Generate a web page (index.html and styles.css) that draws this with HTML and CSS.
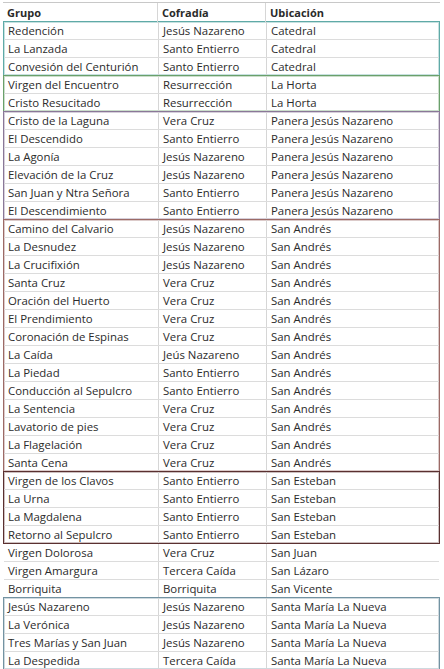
FILE: index.html
```html
<!DOCTYPE html>
<html lang="es">
<head>
<meta charset="utf-8">
<title>Grupos</title>
<link rel="stylesheet" href="styles.css">
</head>
<body>
<div class="sheet">
  <div class="row head">
    <div class="c">Grupo</div><div class="c">Cofradía</div><div class="c">Ubicación</div>
  </div>
  <div class="grp g1">
    <div class="row"><div class="c">Redención</div><div class="c">Jesús Nazareno</div><div class="c">Catedral</div></div>
    <div class="row"><div class="c">La Lanzada</div><div class="c">Santo Entierro</div><div class="c">Catedral</div></div>
    <div class="row"><div class="c">Convesión del Centurión</div><div class="c">Santo Entierro</div><div class="c">Catedral</div></div>
  </div>
  <div class="grp g2">
    <div class="row"><div class="c">Virgen del Encuentro</div><div class="c">Resurrección</div><div class="c">La Horta</div></div>
    <div class="row"><div class="c">Cristo Resucitado</div><div class="c">Resurrección</div><div class="c">La Horta</div></div>
  </div>
  <div class="grp g3">
    <div class="row"><div class="c">Cristo de la Laguna</div><div class="c">Vera Cruz</div><div class="c">Panera Jesús Nazareno</div></div>
    <div class="row"><div class="c">El Descendido</div><div class="c">Santo Entierro</div><div class="c">Panera Jesús Nazareno</div></div>
    <div class="row"><div class="c">La Agonía</div><div class="c">Jesús Nazareno</div><div class="c">Panera Jesús Nazareno</div></div>
    <div class="row"><div class="c">Elevación de la Cruz</div><div class="c">Jesús Nazareno</div><div class="c">Panera Jesús Nazareno</div></div>
    <div class="row"><div class="c">San Juan y Ntra Señora</div><div class="c">Santo Entierro</div><div class="c">Panera Jesús Nazareno</div></div>
    <div class="row"><div class="c">El Descendimiento</div><div class="c">Santo Entierro</div><div class="c">Panera Jesús Nazareno</div></div>
  </div>
  <div class="grp g4">
    <div class="row"><div class="c">Camino del Calvario</div><div class="c">Jesús Nazareno</div><div class="c">San Andrés</div></div>
    <div class="row"><div class="c">La Desnudez</div><div class="c">Jesús Nazareno</div><div class="c">San Andrés</div></div>
    <div class="row"><div class="c">La Crucifixión</div><div class="c">Jesús Nazareno</div><div class="c">San Andrés</div></div>
    <div class="row"><div class="c">Santa Cruz</div><div class="c">Vera Cruz</div><div class="c">San Andrés</div></div>
    <div class="row"><div class="c">Oración del Huerto</div><div class="c">Vera Cruz</div><div class="c">San Andrés</div></div>
    <div class="row"><div class="c">El Prendimiento</div><div class="c">Vera Cruz</div><div class="c">San Andrés</div></div>
    <div class="row"><div class="c">Coronación de Espinas</div><div class="c">Vera Cruz</div><div class="c">San Andrés</div></div>
    <div class="row"><div class="c">La Caída</div><div class="c">Jeús Nazareno</div><div class="c">San Andrés</div></div>
    <div class="row"><div class="c">La Piedad</div><div class="c">Santo Entierro</div><div class="c">San Andrés</div></div>
    <div class="row"><div class="c">Conducción al Sepulcro</div><div class="c">Santo Entierro</div><div class="c">San Andrés</div></div>
    <div class="row"><div class="c">La Sentencia</div><div class="c">Vera Cruz</div><div class="c">San Andrés</div></div>
    <div class="row"><div class="c">Lavatorio de pies</div><div class="c">Vera Cruz</div><div class="c">San Andrés</div></div>
    <div class="row"><div class="c">La Flagelación</div><div class="c">Vera Cruz</div><div class="c">San Andrés</div></div>
    <div class="row"><div class="c">Santa Cena</div><div class="c">Vera Cruz</div><div class="c">San Andrés</div></div>
  </div>
  <div class="grp g5">
    <div class="row"><div class="c">Virgen de los Clavos</div><div class="c">Santo Entierro</div><div class="c">San Esteban</div></div>
    <div class="row"><div class="c">La Urna</div><div class="c">Santo Entierro</div><div class="c">San Esteban</div></div>
    <div class="row"><div class="c">La Magdalena</div><div class="c">Santo Entierro</div><div class="c">San Esteban</div></div>
    <div class="row"><div class="c">Retorno al Sepulcro</div><div class="c">Santo Entierro</div><div class="c">San Esteban</div></div>
  </div>
  <div class="grp loose">
    <div class="row"><div class="c">Virgen Dolorosa</div><div class="c">Vera Cruz</div><div class="c">San Juan</div></div>
    <div class="row"><div class="c">Virgen Amargura</div><div class="c">Tercera Caída</div><div class="c">San Lázaro</div></div>
    <div class="row"><div class="c">Borriquita</div><div class="c">Borriquita</div><div class="c">San Vicente</div></div>
  </div>
  <div class="grp g6">
    <div class="row"><div class="c">Jesús Nazareno</div><div class="c">Jesús Nazareno</div><div class="c">Santa María La Nueva</div></div>
    <div class="row"><div class="c">La Verónica</div><div class="c">Jesús Nazareno</div><div class="c">Santa María La Nueva</div></div>
    <div class="row"><div class="c">Tres Marías y San Juan</div><div class="c">Jesús Nazareno</div><div class="c">Santa María La Nueva</div></div>
    <div class="row"><div class="c">La Despedida</div><div class="c">Tercera Caída</div><div class="c">Santa María La Nueva</div></div>
  </div>
</div>
</body>
</html>
```
FILE: styles.css
```css
html, body {
  margin: 0;
  padding: 0;
  background: #ffffff;
}
.sheet {
  width: 437px;
  margin-left: 3px;
  padding-top: 2px;
  font-family: "Open Sans", "DejaVu Sans", sans-serif;
  font-size: 11.4px;
  color: #2b2b2b;
}
.row {
  display: grid;
  grid-template-columns: 154px 108px 1fr;
  height: 18px;
  box-sizing: border-box;
  border-bottom: 1px solid #dcdcdc;
}
.c {
  padding-left: 4px;
  line-height: 17px;
  white-space: nowrap;
  overflow: hidden;
  border-left: 1px solid #d6d6d6;
}
.c:first-child {
  border-left: none;
}
.head {
  height: 20px;
  border-top: 1px solid #c8c8c8;
  border-bottom: none;
  font-weight: 700;
  font-size: 11px;
  color: #2a2a2a;
}
.head .c {
  line-height: 19px;
}
.grp {
  border: 1px solid #aaa;
  margin-top: -1px;
}
.grp .row:last-child {
  height: 17px;
  border-bottom: none;
}
.g1 { border-color: #5faaa7; box-shadow: inset 0 0 0 1px rgba(95, 170, 167, 0.35); }
.g2 { border-color: #6aa06b; box-shadow: inset 0 0 0 1px rgba(106, 160, 107, 0.35); }
.g3 { border-color: #8a7898; box-shadow: inset 0 0 0 1px rgba(138, 120, 152, 0.35); }
.g4 { border-color: #9c6a66; box-shadow: inset 0 0 0 1px rgba(156, 106, 102, 0.35); }
.g5 { border-color: #5a3030; box-shadow: inset 0 0 0 1px rgba(90, 48, 48, 0.3); }
.g6 { border-color: #7393a2; box-shadow: inset 0 0 0 1px rgba(115, 147, 162, 0.35); }
.loose {
  border-color: transparent;
  border-bottom-color: #cfcfcf;
}
```
